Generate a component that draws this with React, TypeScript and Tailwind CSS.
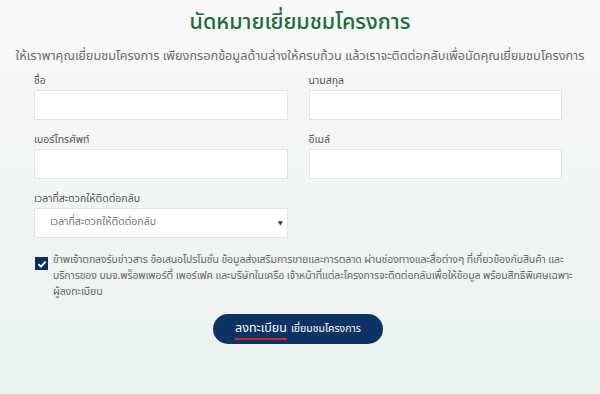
import React, { useState } from 'react';

const thai = { fontFamily: '"Noto Sans Thai", "Noto Sans", "DejaVu Sans", sans-serif' };

function Field({ label }: { label: string }) {
  return (
    <div className="flex flex-col">
      <label className="text-[10.5px] leading-[16px] text-[#555] mb-[1px]">{label}</label>
      <input
        type="text"
        className="h-[30px] w-full bg-white border border-[#e2e4e3] outline-none px-3 text-[11px]"
      />
    </div>
  );
}

export default function App() {
  const [agree, setAgree] = useState(true);

  return (
    <div
      className="w-[600px] h-[394px] overflow-hidden bg-gradient-to-b from-[#f9f9f9] to-[#e9f2ef]"
      style={thai}
    >
      <div className="pt-[7px] flex flex-col items-center">
        <h1 className="text-[21.5px] leading-[32px] font-medium text-[#1d6b3b]">
          นัดหมายเยี่ยมชมโครงการ
        </h1>
        <p className="mt-[8px] text-[12.7px] leading-[20px] text-[#6a6a6a] whitespace-nowrap">
          ให้เราพาคุณเยี่ยมชมโครงการ เพียงกรอกข้อมูลด้านล่างให้ครบถ้วน แล้วเราจะติดต่อกลับเพื่อนัดคุณเยี่ยมชมโครงการ
        </p>
      </div>

      <form className="ml-[34px] w-[528px] mt-[6px]" onSubmit={(e) => e.preventDefault()}>
        <div className="grid grid-cols-2 gap-x-[21px] gap-y-[12px]">
          <Field label="ชื่อ" />
          <Field label="นามสกุล" />
          <Field label="เบอร์โทรศัพท์" />
          <Field label="อีเมล์" />
          <div className="flex flex-col">
            <label className="text-[10.5px] leading-[16px] text-[#555] mb-[1px]">เวลาที่สะดวกให้ติดต่อกลับ</label>
            <div className="relative h-[30px] bg-white border border-[#e2e4e3] flex items-center pl-[15px]">
              <span className="text-[10.5px] text-[#777]">เวลาที่สะดวกให้ติดต่อกลับ</span>
              <span className="absolute right-[4px] top-1/2 -translate-y-1/2 text-[6px] text-[#333]">▼</span>
            </div>
          </div>
        </div>

        <div className="mt-[14px] flex items-start gap-[5px]">
          <button
            type="button"
            onClick={() => setAgree(!agree)}
            className="mt-[5px] ml-[1px] w-[13px] h-[13px] shrink-0 bg-[#0d2f5c] flex items-center justify-center"
          >
            {agree && (
              <svg width="10" height="10" viewBox="0 0 10 10">
                <path d="M1.5 5.2 L4 7.6 L8.6 2.6" stroke="white" strokeWidth="1.8" fill="none" />
              </svg>
            )}
          </button>
          <p className="text-[10.5px] leading-[16px] text-[#666] whitespace-nowrap tracking-[-0.1px]">
            ข้าพเจ้าตกลงรับข่าวสาร ข้อเสนอโปรโมชั่น ข้อมูลส่งเสริมการขายและการตลาด ผ่านช่องทางและสื่อต่างๆ ที่เกี่ยวข้องกับสินค้า และ
            <br />
            บริการของ บมจ.พร็อพเพอร์ตี้ เพอร์เฟค และบริษัทในเครือ เจ้าหน้าที่แต่ละโครงการจะติดต่อกลับเพื่อให้ข้อมูล พร้อมสิทธิพิเศษเฉพาะ
            <br />
            ผู้ลงทะเบียน
          </p>
        </div>

        <div className="mt-[14px] flex justify-center">
          <button
            type="submit"
            className="h-[30px] w-[170px] rounded-full bg-[#0c3364] text-white flex items-center justify-center gap-[4px]"
          >
            <span className="relative text-[12.5px] leading-[18px]">
              ลงทะเบียน
              <span className="absolute left-0 right-0 -bottom-[2px] h-[2px] bg-[#d3262e]" />
            </span>
            <span className="text-[10.5px] leading-[18px]">เยี่ยมชมโครงการ</span>
          </button>
        </div>
      </form>
    </div>
  );
}
